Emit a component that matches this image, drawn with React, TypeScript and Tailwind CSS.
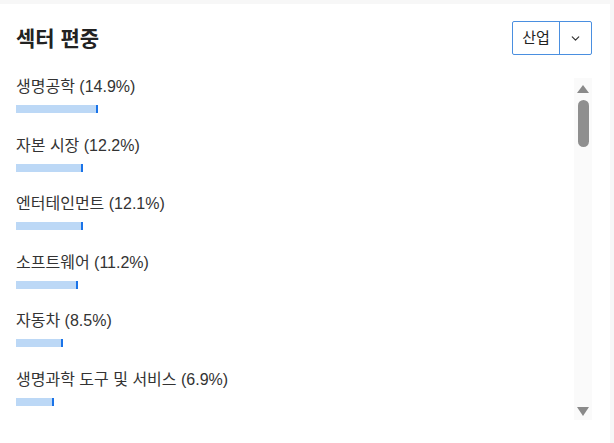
import { ChevronDown } from "lucide-react"

const sectors = [
  { name: "생명공학", pct: 14.9 },
  { name: "자본 시장", pct: 12.2 },
  { name: "엔터테인먼트", pct: 12.1 },
  { name: "소프트웨어", pct: 11.2 },
  { name: "자동차", pct: 8.5 },
  { name: "생명과학 도구 및 서비스", pct: 6.9 },
]

const font = { fontFamily: '"Liberation Sans", Arial, "Noto Sans CJK KR", sans-serif' }

function ScrollBar() {
  return (
    <div className="w-[18px] shrink-0 bg-[#fafafa] flex flex-col items-center pt-[7px] pb-[4px]">
      <div className="w-0 h-0 border-l-[6px] border-r-[6px] border-b-[8px] border-l-transparent border-r-transparent border-b-[#8a8a8a]" />
      <div className="mt-[7px] w-[11px] h-[47px] rounded-full bg-[#8f8f8f]" />
      <div className="flex-1" />
      <div className="w-0 h-0 border-l-[6px] border-r-[6px] border-t-[9px] border-l-transparent border-r-transparent border-t-[#8a8a8a]" />
    </div>
  )
}

export default function App() {
  return (
    <div className="w-[614px] h-[443px] bg-[#f7f7f7] pt-[4px] overflow-hidden" style={font}>
      <div className="w-[610px] h-[439px] bg-white pl-4 pr-[18px] pt-[17px]">
        {/* Header */}
        <div className="flex items-center justify-between h-[34px]">
          <h2 className="text-[21px] font-bold text-[#222] leading-none">섹터 편중</h2>
          <div className="flex h-[34px] border border-[#4a8fe0] rounded-[2px] text-[15px] text-[#222]">
            <button type="button" className="w-[47px] flex items-center justify-center border-r border-[#4a8fe0]">
              산업
            </button>
            <button type="button" className="w-[31px] flex items-center justify-center">
              <ChevronDown className="w-[13px] h-[13px] text-[#333]" strokeWidth={2.2} />
            </button>
          </div>
        </div>

        {/* List + scrollbar */}
        <div className="flex h-[342px] mt-[23px]">
          <div className="flex-1 overflow-hidden">
            {sectors.map((s) => (
              <div key={s.name} className="h-[58.5px]">
                <div className="text-[16px] leading-[18px] text-[#333]">
                  {s.name} ({s.pct}%)
                </div>
                <div
                  className="mt-[9px] h-[8px] bg-[#bcd8f6] border-r-2 border-[#1a73e8]"
                  style={{ width: Math.round(s.pct * 5.5) }}
                />
              </div>
            ))}
          </div>
          <ScrollBar />
        </div>
      </div>
    </div>
  )
}
